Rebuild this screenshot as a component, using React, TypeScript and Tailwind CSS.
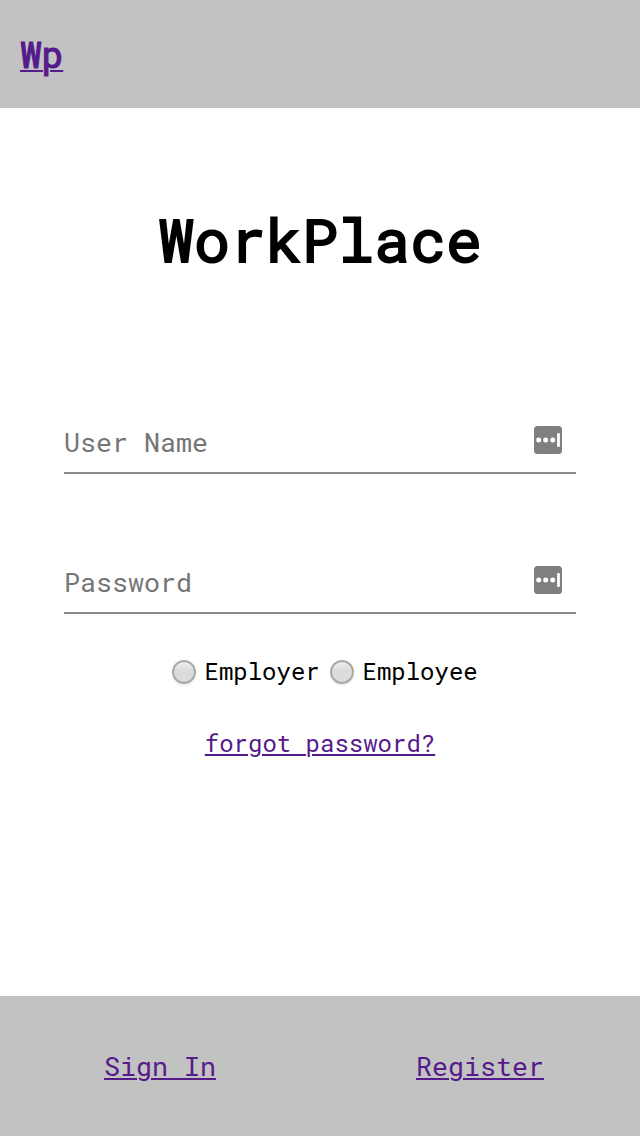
function Field({ label, type }: { label: string; type: string }) {
  return (
    <div className="flex h-[66px] w-full items-start border-b-2 border-[#8a8a8a]">
      <input
        type={type}
        placeholder={label}
        className="h-[67px] min-w-0 flex-1 bg-transparent text-[26.66px] outline-none placeholder:text-[#757575]"
      />
      <svg width="28" height="28" viewBox="0 0 28 28" className="mt-[18px] mr-3.5 shrink-0">
        <rect width="28" height="28" rx="3.5" fill="#7f7f7f" />
        <circle cx="4.7" cy="14" r="2.5" fill="#fff" />
        <circle cx="11.7" cy="14" r="2.5" fill="#fff" />
        <circle cx="18.7" cy="14" r="2.5" fill="#fff" />
        <rect x="23.1" y="7" width="2.8" height="14" rx="1" fill="#fff" />
      </svg>
    </div>
  );
}

function Radio({ label }: { label: string }) {
  return (
    <label className="flex items-center">
      <input
        type="radio"
        name="role"
        className="mt-0.5 mr-[9px] size-6 appearance-none rounded-full border-2 border-[#a9a9a9] bg-linear-to-b from-[#ededed] from-5% to-[#dcdcdc] to-40% shadow-[0_2px_1px_rgba(0,0,0,0.06)]"
      />
      <span className="w-[115px]">{label}</span>
    </label>
  );
}

export default function App() {
  return (
    <div className="flex h-[1136px] w-[640px] flex-col bg-white font-['Roboto_Mono','Liberation_Mono',monospace] text-black">
      <header className="flex h-[108px] items-center bg-[#c2c2c2] px-5">
        <a href="#" className="text-4xl text-[#551a8b] underline decoration-2 underline-offset-2 [-webkit-text-stroke:1.2px_#551a8b]">Wp</a>
      </header>
      <main className="flex flex-1 flex-col items-center px-16">
        <h1 className="mt-[91px] text-[60px] leading-[80px] [-webkit-text-stroke:1.9px_black]">WorkPlace</h1>
        <form className="mt-[129px] flex w-full flex-col gap-[74px]">
          <Field label="User Name" type="text" />
          <Field label="Password" type="password" />
        </form>
        <div className="mt-[41px] flex gap-2.5 pl-[9px] text-2xl">
          <Radio label="Employer" />
          <Radio label="Employee" />
        </div>
        <a href="#" className="mt-10 text-2xl text-[#551a8b] underline decoration-2 underline-offset-2">forgot password?</a>
      </main>
      <footer className="grid h-[140px] grid-cols-2 place-items-center bg-[#c2c2c2] text-[26.66px] text-[#551a8b]">
        <a href="#" className="underline decoration-2 underline-offset-2">Sign In</a>
        <a href="#" className="underline decoration-2 underline-offset-2">Register</a>
      </footer>
    </div>
  );
}
